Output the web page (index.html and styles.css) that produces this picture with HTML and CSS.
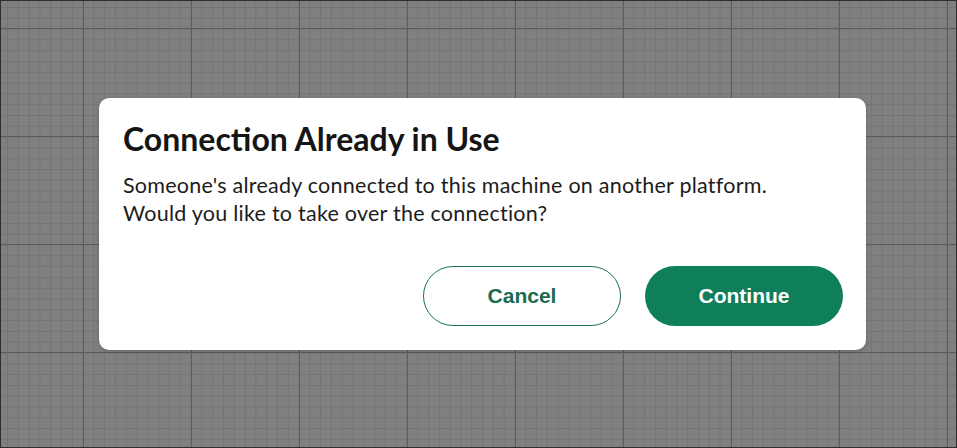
FILE: index.html
```html
<!DOCTYPE html>
<html lang="en">
<head>
    <meta charset="UTF-8">
    <meta name="viewport" content="width=device-width, initial-scale=1.0">
    <title>Connection Already in Use</title>
    <link rel="stylesheet" href="styles.css">
</head>
<body>
    <div class="canvas">
        <div class="dialog">
            <h2 class="title">Connection Already in Use</h2>
            <p class="message">Someone's already connected to this machine on another platform.<br>Would you like to take over the connection?</p>
            <div class="actions">
                <button class="btn cancel">Cancel</button>
                <button class="btn continue">Continue</button>
            </div>
        </div>
    </div>
</body>
</html>
```

FILE: styles.css
```css
html, body {
    margin: 0;
    height: 100%;
}
body {
    font-family: Lato, "Open Sans", sans-serif;
}
.canvas {
    box-sizing: border-box;
    height: 448px;
    border: 1px solid #2e2e2e;
    background-color: #808080;
    background-image:
        linear-gradient(to right, #5c5c5c 1px, transparent 1px),
        linear-gradient(to bottom, #5c5c5c 1px, transparent 1px),
        linear-gradient(to right, #747474 1px, transparent 1px),
        linear-gradient(to bottom, #747474 1px, transparent 1px);
    background-size: 108px 108px, 108px 108px, 10.8px 10.8px, 10.8px 10.8px;
    background-position: 82px 27px, 82px 27px, 6px 6px, 6px 6px;
    display: flex;
    justify-content: center;
    padding-top: 97px;
}
.dialog {
    box-sizing: border-box;
    width: 767px;
    height: 252px;
    margin-left: 8px;
    background: #fff;
    border-radius: 10px;
    padding: 22px 23px 24px 24px;
    display: flex;
    flex-direction: column;
    box-shadow: 0 1px 4px rgba(0, 0, 0, 0.2);
}
.title {
    margin: 0;
    font-size: 32px;
    font-weight: 700;
    color: #151515;
    line-height: 38px;
}
.message {
    margin: 13px 0 0;
    font-size: 21.5px;
    letter-spacing: 0.25px;
    line-height: 28px;
    color: #1c1c1c;
}
.actions {
    margin-top: auto;
    display: flex;
    justify-content: flex-end;
    gap: 24px;
}
.btn {
    width: 198px;
    height: 60px;
    border-radius: 30px;
    font-family: "Liberation Sans", Arial, sans-serif;
    font-size: 21px;
    font-weight: 700;
    cursor: pointer;
}
.cancel {
    background: #fff;
    border: 1.5px solid #1b6f55;
    color: #1a6b52;
}
.continue {
    background: #0f7f5b;
    border: none;
    color: #fff;
}
```
